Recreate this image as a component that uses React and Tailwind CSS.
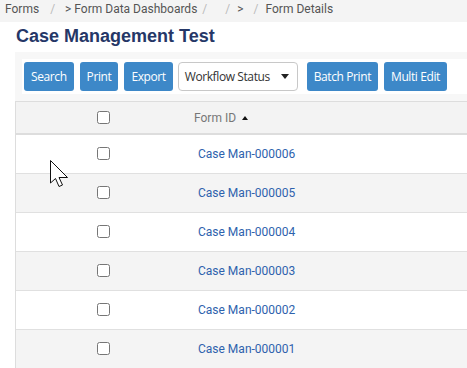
import React from "react";

const rows = [
  "Case Man-000006",
  "Case Man-000005",
  "Case Man-000004",
  "Case Man-000003",
  "Case Man-000002",
  "Case Man-000001",
];

function ToolButton({ children }) {
  return (
    <button className="h-[29px] px-[7px] rounded-[3px] bg-[#3d88c8] text-white text-[12px] tracking-[-0.4px] font-['Open_Sans',sans-serif] leading-none">
      {children}
    </button>
  );
}

function Cursor() {
  return (
    <svg
      className="absolute left-[50px] top-[160px] pointer-events-none"
      width="20"
      height="28"
      viewBox="0 0 20 28"
    >
      <path
        d="M0.5 0.5 L0.5 23 L5.5 18.5 L9 26.5 L12.5 25 L9 17.5 L17.5 17.5 Z"
        fill="#fff"
        stroke="#111"
        strokeWidth="1"
        strokeLinejoin="round"
      />
    </svg>
  );
}

export default function App() {
  return (
    <div className="relative w-[467px] h-[368px] overflow-hidden bg-white font-['Roboto',sans-serif]">
      {/* breadcrumb */}
      <div className="h-[22px] pt-[2px] bg-[#f4f4f4] flex text-[12px] leading-[14px] text-[#555]">
        <span className="ml-[5px]">Forms</span>
        <span className="ml-[11px] text-[#bbb]">/</span>
        <span className="ml-[10px]">&gt; Form Data Dashboards</span>
        <span className="ml-[5px] text-[#bbb]">/</span>
        <span className="ml-[18px] text-[#bbb]">/</span>
        <span className="ml-[7px]">&gt;</span>
        <span className="ml-[10px] text-[#bbb]">/</span>
        <span className="ml-[7px]">Form Details</span>
      </div>

      <h1 className="mt-[5px] ml-[16px] text-[18px] leading-[18px] font-bold text-[#253767] font-['Liberation_Sans',Arial,sans-serif]">
        Case Management Test
      </h1>

      {/* toolbar */}
      <div className="mt-[7px] ml-[15px] bg-[#f7f7f7] py-[7px] pl-[7px]">
        <div className="bg-white flex items-center py-[3px] pl-[2px]">
          <ToolButton>Search</ToolButton>
          <div className="ml-[6px]">
            <ToolButton>Print</ToolButton>
          </div>
          <div className="ml-[6px]">
            <ToolButton>Export</ToolButton>
          </div>
          <div className="ml-[5px] w-[120px] h-[29px] border border-[#c8c8c8] rounded-[4px] flex items-center justify-between pl-[6px] pr-[8px] text-[12px] tracking-[-0.4px] text-[#333] font-['Open_Sans',sans-serif]">
            <span>Workflow Status</span>
            <span className="w-0 h-0 border-l-[4.5px] border-r-[4.5px] border-t-[5px] border-l-transparent border-r-transparent border-t-[#222]" />
          </div>
          <div className="ml-[9px]">
            <ToolButton>Batch Print</ToolButton>
          </div>
          <div className="ml-[6px]">
            <ToolButton>Multi Edit</ToolButton>
          </div>
        </div>
      </div>

      {/* table */}
      <div className="ml-[15px] border-l border-[#dddddd] text-[12px]">
        <div className="h-[34px] flex items-center bg-[#f3f3f3] border-t border-b-2 border-[#dddddd]">
          <div className="w-[174px] flex justify-center">
            <input type="checkbox" className="m-0 w-[13px] h-[13px]" />
          </div>
          <div className="pl-[4px] text-[#777] flex items-center">
            Form ID
            <span className="ml-[6px] w-0 h-0 border-l-[3.5px] border-r-[3.5px] border-b-[4px] border-l-transparent border-r-transparent border-b-[#111]" />
          </div>
        </div>
        {rows.map((r, i) => (
          <div
            key={r}
            className={
              "h-[39px] pb-[1px] flex items-center border-b border-[#e0e0e0] " +
              (i % 2 === 0 ? "bg-white" : "bg-[#f4f4f4]")
            }
          >
            <div className="w-[174px] flex justify-center">
              <input type="checkbox" className="m-0 w-[13px] h-[13px]" />
            </div>
            <div className="pl-[8px] text-[#2e62ad]">{r}</div>
          </div>
        ))}
      </div>

      <Cursor />
    </div>
  );
}
